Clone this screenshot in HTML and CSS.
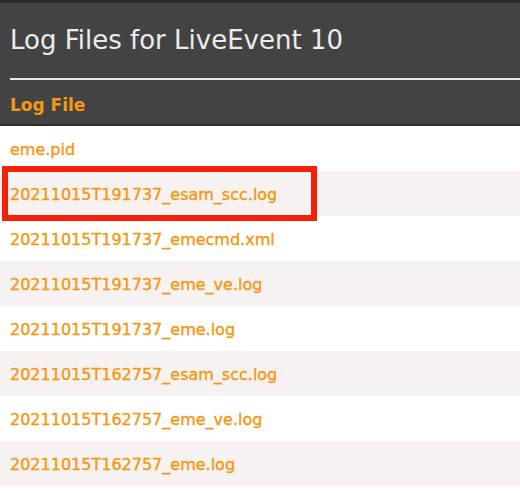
FILE: index.html
```html
<!DOCTYPE html>
<html>
<head>
<meta charset="utf-8">
<link rel="stylesheet" href="styles.css">
</head>
<body>
<div class="page">
  <div class="topbar"></div>
  <div class="head">
    <h1 class="title">Log Files for LiveEvent 10</h1>
    <div class="rule"></div>
    <div class="colhead">Log File</div>
  </div>
  <ul class="rows">
    <li class="row">eme.pid</li>
    <li class="row alt"><span class="hl">20211015T191737_esam_scc.log</span></li>
    <li class="row">20211015T191737_emecmd.xml</li>
    <li class="row alt">20211015T191737_eme_ve.log</li>
    <li class="row">20211015T191737_eme.log</li>
    <li class="row alt">20211015T162757_esam_scc.log</li>
    <li class="row">20211015T162757_eme_ve.log</li>
    <li class="row alt">20211015T162757_eme.log</li>
  </ul>
</div>
</body>
</html>
```
FILE: styles.css
```css
html, body { margin: 0; padding: 0; background: #fff; }
.page { width: 520px; height: 493px; overflow: hidden; font-family: "DejaVu Sans", Verdana, sans-serif; }
.topbar { height: 3px; background: #2b2b2b; }
.head { background: #434343; padding-left: 10px; border-bottom: 2px solid #2e2e2e; }
.title { margin: 0; height: 75px; box-sizing: border-box; padding-top: 22px; font-weight: normal; font-size: 26px; line-height: 30px; color: #ececec; }
.rule { height: 2px; background: #e8e8e8; }
.colhead { height: 44px; line-height: 50px; font-size: 17px; font-weight: bold; color: #f59a0f; }
.rows { list-style: none; margin: 0; padding: 0; }
.row { position: relative; height: 45px; line-height: 47px; padding-left: 10px; font-size: 16px; color: #f5960f; -webkit-text-stroke: 0.35px #f5960f; }
.row.alt { background: #f6f2f2; }
.hl::before { content: ""; position: absolute; left: 2px; top: -5px; width: 315px; height: 55px; box-sizing: border-box; border: 6px solid #f61f0a; }
```
